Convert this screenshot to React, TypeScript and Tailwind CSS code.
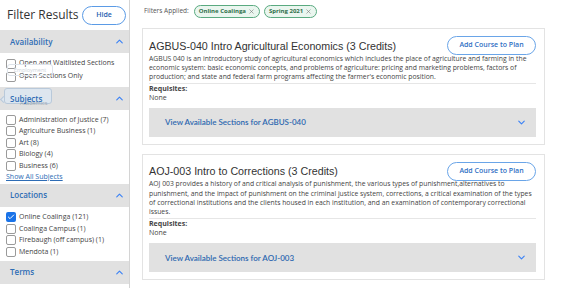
import { ChevronDown, ChevronUp, Check, X } from "lucide-react";

const body = { fontFamily: '"Open Sans", "Liberation Sans", sans-serif' };

function Box({ checked = false }: { checked?: boolean }) {
  if (checked) {
    return (
      <span className="flex h-[10px] w-[10px] shrink-0 items-center justify-center rounded-[2px] bg-[#1a73e8]">
        <Check size={8} strokeWidth={3} color="#fff" />
      </span>
    );
  }
  return <span className="h-[10px] w-[10px] shrink-0 rounded-[2px] border border-[#9a9a9a] bg-white" />;
}

function Option({ label, checked }: { label: string; checked?: boolean }) {
  return (
    <div className="flex h-[11.5px] items-center gap-[3px] text-[7px] text-[#444]">
      <Box checked={checked} />
      <span>{label}</span>
    </div>
  );
}

function Section({ title, children }: { title: React.ReactNode; children?: React.ReactNode }) {
  return (
    <>
      <div className="flex h-[23px] items-center justify-between bg-[#e1e1e1] pl-[10px] pr-[4px] text-[8px] font-semibold text-[#2f6db5]">
        {title}
        <ChevronUp size={11} strokeWidth={2.5} color="#3b82f6" />
      </div>
      {children}
    </>
  );
}

function Course({
  title,
  lines,
  code,
}: {
  title: string;
  lines: string[];
  code: string;
}) {
  return (
    <div className="border border-[#e3e3e3] bg-white px-[6px] pb-[7px] pt-[7px]">
      <div className="flex items-center justify-between pr-[2px]">
        <div
          className="text-[10.7px] leading-[14px] text-[#333]"
          style={{ fontFamily: '"Liberation Sans", Arial, sans-serif' }}
        >
          {title}
        </div>
        <button className="h-[19px] w-[89px] rounded-full border border-[#6aa5e8] bg-white text-[7px] font-semibold text-[#2f6fc4]">
          Add Course to Plan
        </button>
      </div>
      <p className="mt-[-1.5px] whitespace-nowrap text-[6.8px] leading-[9.3px] text-[#444]">
        {lines.map((l, i) => (
          <span key={i}>
            {l}
            {i < lines.length - 1 && <br />}
          </span>
        ))}
      </p>
      <div className="mr-[2px] mt-[1.5px] border-t border-[#e6e6e6] text-[7px] leading-[9px] text-[#444]">
        <div className="font-bold">Requisites:</div>
        <div>None</div>
      </div>
      <div className="mr-[2px] mt-[6px] flex h-[29px] items-center justify-between bg-[#e1e1e1] pl-[16px] pr-[9px]">
        <span className="text-[8px] font-semibold text-[#2d68b0]" style={{ fontFamily: "Lato, sans-serif" }}>
          View Available Sections for {code}
        </span>
        <ChevronDown size={11} strokeWidth={2.5} color="#3b82f6" />
      </div>
    </div>
  );
}

function Chip({ label }: { label: string }) {
  return (
    <span className="flex h-[13px] items-center gap-[2px] rounded-full border-[1.5px] border-[#5aaa80] bg-[#eaf6ef] px-[4px] text-[6px] font-bold text-[#2e6e4a]">
      {label}
      <X size={7} strokeWidth={2} color="#777" />
    </span>
  );
}

export default function App() {
  return (
    <div className="flex h-[288px] w-[586px] overflow-hidden bg-white" style={body}>
      <aside className="relative w-[130px] shrink-0 border-r border-[#d4d4d4]">
        <div className="flex h-[30px] items-center justify-between pl-[7px] pr-[3px]">
          <span className="text-[12px] text-[#333]">Filter Results</span>
          <button className="h-[19px] w-[44px] rounded-full border border-[#5b9be6] bg-white text-[7px] font-semibold text-[#1f5fb0]">
            Hide
          </button>
        </div>
        <Section title="Availability">
          <div className="px-[6px] py-[4px]">
            <div className="flex h-[13px] items-center gap-[3px] text-[7px] text-[#444]">
              <Box />
              <span>Open and Waitlisted Sections</span>
            </div>
            <div className="flex h-[13px] items-center gap-[3px] text-[7px] text-[#444]">
              <Box />
              <span>Open Sections Only</span>
            </div>
          </div>
        </Section>
        <Section
          title={
            <span className="relative">
              <span className="absolute left-[-9px] top-[4px] h-[5px] w-[5px] rotate-45 border-b border-l border-[#b9c9da] bg-[#dde6ef]" />
              <span className="absolute left-[-6px] top-[-5px] h-[16px] w-[48px] rounded-[3px] border border-[#b9c9da] bg-[#dde6ef]" />
              <span className="absolute left-[10px] top-[6px] text-[5.5px] font-normal text-[#9aa5b0]">Academics</span>
              <span className="relative">Subjects</span>
            </span>
          }
        >
          <div className="px-[6px] pb-[2px] pt-[4px]">
            <Option label="Administration of Justice (7)" />
            <Option label="Agriculture Business (1)" />
            <Option label="Art (8)" />
            <Option label="Biology (4)" />
            <Option label="Business (6)" />
            <div className="text-[7px] leading-[10px] text-[#2d6cb5] underline">Show All Subjects</div>
          </div>
        </Section>
        <Section title="Locations">
          <div className="px-[6px] pb-[3px] pt-[5px]">
            <Option label="Online Coalinga (121)" checked />
            <Option label="Coalinga Campus (1)" />
            <Option label="Firebaugh (off campus) (1)" />
            <Option label="Mendota (1)" />
          </div>
        </Section>
        <Section title="Terms" />
        <div className="pointer-events-none absolute left-[7px] top-[64px] flex h-[12px] w-[46px] items-end justify-center rounded-[3px] border border-[#dde3ea] pb-[1px] text-[5.5px] text-[#cdd4db]">
          Employment
        </div>
      </aside>
      <main className="flex-1 pl-[12px] pr-[41px]">
        <div className="flex h-[22px] items-center gap-[4px] pl-[2px] text-[6.5px] text-[#555]">
          <span className="mr-[1px]">Filters Applied:</span>
          <Chip label="Online Coalinga" />
          <Chip label="Spring 2021" />
        </div>
        <div className="mt-[6px] flex flex-col gap-[9px]">
          <Course
            title="AGBUS-040 Intro Agricultural Economics (3 Credits)"
            code="AGBUS-040"
            lines={[
              "AGBUS 040 is an introductory study of agricultural economics which includes the place of agriculture and farming in the",
              "economic system: basic economic concepts, and problems of agriculture: pricing and marketing problems, factors of",
              "production; and state and federal farm programs affecting the farmer's economic position.",
            ]}
          />
          <Course
            title="AOJ-003 Intro to Corrections (3 Credits)"
            code="AOJ-003"
            lines={[
              "AOJ 003 provides a history of and critical analysis of punishment, the various types of punishment,alternatives to",
              "punishment, and the impact of punishment on the criminal justice system, corrections, a critical examination of the types",
              "of correctional institutions and the clients housed in each institution, and an examination of contemporary correctional",
              "issues.",
            ]}
          />
        </div>
      </main>
    </div>
  );
}
